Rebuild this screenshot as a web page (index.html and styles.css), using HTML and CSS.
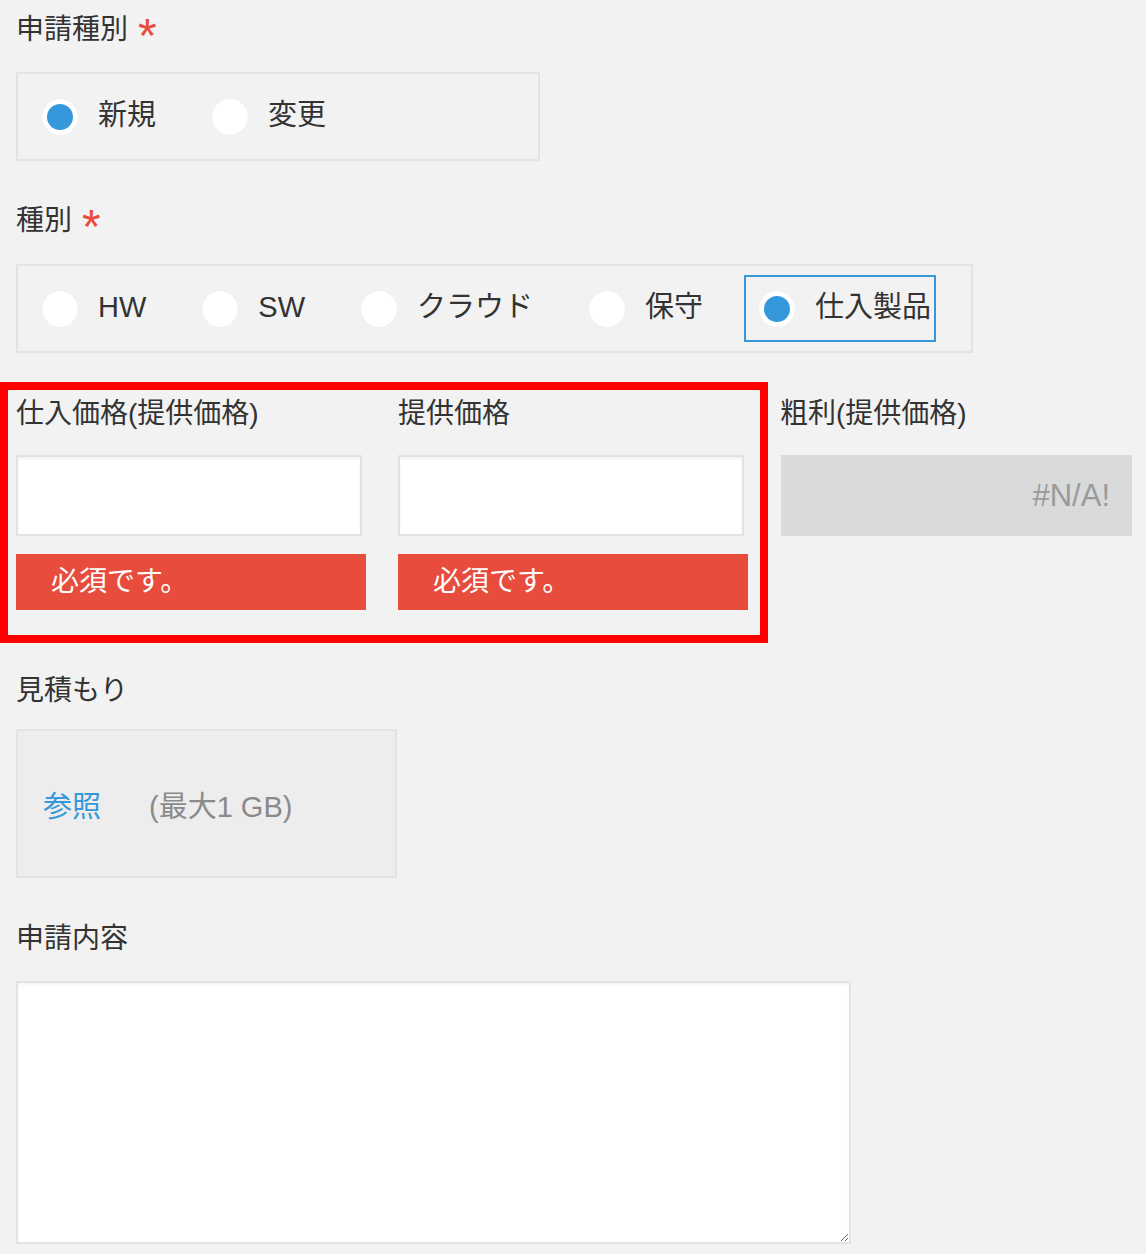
FILE: index.html
```html
<!DOCTYPE html>
<html lang="ja">
<head>
<meta charset="utf-8">
<title>申請フォーム</title>
<link rel="stylesheet" href="styles.css">
</head>
<body>
<div class="form">
  <div class="field">
    <div class="label">申請種別<span class="req">*</span></div>
    <div class="radio-group w-524">
      <label class="radio-item"><span class="radio checked"></span><span class="radio-text">新規</span></label>
      <label class="radio-item"><span class="radio"></span><span class="radio-text">変更</span></label>
    </div>
  </div>

  <div class="field gap-top">
    <div class="label">種別<span class="req">*</span></div>
    <div class="radio-group w-957">
      <label class="radio-item"><span class="radio"></span><span class="radio-text">HW</span></label>
      <label class="radio-item"><span class="radio"></span><span class="radio-text">SW</span></label>
      <label class="radio-item"><span class="radio"></span><span class="radio-text">クラウド</span></label>
      <label class="radio-item"><span class="radio"></span><span class="radio-text">保守</span></label>
      <label class="radio-item focused"><span class="radio checked"></span><span class="radio-text">仕入製品</span></label>
    </div>
  </div>

  <div class="price-row">
    <div class="highlight">
      <div class="col">
        <div class="label">仕入価格(提供価格)</div>
        <input class="text-input" type="text">
        <div class="error">必須です。</div>
      </div>
      <div class="col">
        <div class="label">提供価格</div>
        <input class="text-input" type="text">
        <div class="error">必須です。</div>
      </div>
    </div>
    <div class="calc-col">
      <div class="label">粗利(提供価格)</div>
      <div class="calc-box">#N/A!</div>
    </div>
  </div>

  <div class="field gap-file">
    <div class="label">見積もり</div>
    <div class="file-box">
      <span class="browse">参照</span>
      <span class="max">(最大1 GB)</span>
    </div>
  </div>

  <div class="field gap-text">
    <div class="label">申請内容</div>
    <textarea class="textarea"></textarea>
  </div>
</div>
</body>
</html>
```

FILE: styles.css
```css
html, body {
  margin: 0;
  padding: 0;
  background: #f2f2f2;
}

body {
  font-family: "Liberation Sans", "Noto Sans CJK JP", sans-serif;
  color: #333333;
}

.form {
  padding: 10px 0 0 16px;
  display: flex;
  flex-direction: column;
}

.field {
  display: flex;
  flex-direction: column;
  align-items: flex-start;
}

.label {
  height: 40px;
  line-height: 40px;
  font-size: 28px;
  color: #333333;
  white-space: nowrap;
}

.req {
  display: inline-block;
  color: #e74c3c;
  font-size: 48px;
  line-height: 40px;
  height: 40px;
  margin-left: 10px;
  vertical-align: top;
  position: relative;
  top: 6px;
}

.radio-group {
  margin-top: 22px;
  box-sizing: border-box;
  height: 89px;
  border: 2px solid #e3e3e3;
  padding: 9px 9px;
  display: flex;
  align-items: center;
  gap: 36px;
}

.gap-top .radio-group {
  margin-top: 23px;
}

.w-524 { width: 524px; }
.w-957 { width: 957px; }

.radio-item {
  box-sizing: border-box;
  height: 67px;
  display: flex;
  align-items: center;
  padding: 0 3px 0 13px;
  border: 2px solid transparent;
}

.radio-item.focused {
  border-color: #3498db;
}

.radio {
  width: 36px;
  height: 36px;
  border-radius: 50%;
  background: #ffffff;
  box-shadow: 0 0 1px rgba(0, 0, 0, 0.08);
  margin-right: 20px;
  display: flex;
  align-items: center;
  justify-content: center;
  flex: none;
}

.radio.checked::after {
  content: "";
  width: 26px;
  height: 26px;
  border-radius: 50%;
  background: #3498db;
}

.radio-text {
  font-size: 29px;
  line-height: 40px;
  color: #333333;
  white-space: nowrap;
  position: relative;
  top: -2px;
}

.gap-top {
  margin-top: 40px;
}

.price-row {
  margin-top: 29px;
  margin-left: -16px;
  display: flex;
  align-items: flex-start;
}

.highlight {
  border: 8px solid #ff0000;
  padding: 4px 12px 25px 8px;
  display: flex;
  gap: 32px;
}

.col {
  width: 350px;
  display: flex;
  flex-direction: column;
}

.text-input {
  margin: 21px 0 0 0;
  box-sizing: border-box;
  width: 346px;
  height: 81px;
  border: 2px solid #e3e3e3;
  background: #ffffff;
  box-shadow: inset 0 2px 3px rgba(0, 0, 0, 0.05);
  padding: 0;
  outline: none;
}

.error {
  margin-top: 18px;
  height: 56px;
  background: #e74c3c;
  color: #ffffff;
  font-size: 28px;
  line-height: 56px;
  padding-left: 35px;
}

.calc-col {
  margin-left: 12px;
  padding-top: 12px;
  width: 352px;
  display: flex;
  flex-direction: column;
}

.calc-box {
  margin-top: 21px;
  margin-left: 1px;
  box-sizing: border-box;
  height: 81px;
  background: #d9dadb;
  color: #9a9a9a;
  font-size: 31px;
  line-height: 81px;
  text-align: right;
  padding-right: 22px;
}

.gap-file {
  margin-top: 28px;
}

.file-box {
  margin-top: 18px;
  box-sizing: border-box;
  width: 381px;
  height: 149px;
  background: #ededed;
  border: 2px solid #e3e3e3;
  display: flex;
  align-items: center;
  padding-left: 25px;
  font-size: 29px;
}

.browse {
  color: #3498db;
}

.max {
  color: #8a8a8a;
  margin-left: 48px;
}

.gap-text {
  margin-top: 41px;
}

.textarea {
  margin-top: 22px;
  box-sizing: border-box;
  width: 835px;
  height: 263px;
  border: 2px solid #e3e3e3;
  background: #ffffff;
  box-shadow: inset 0 2px 3px rgba(0, 0, 0, 0.04);
  outline: none;
  resize: both;
  padding: 0;
}
```
